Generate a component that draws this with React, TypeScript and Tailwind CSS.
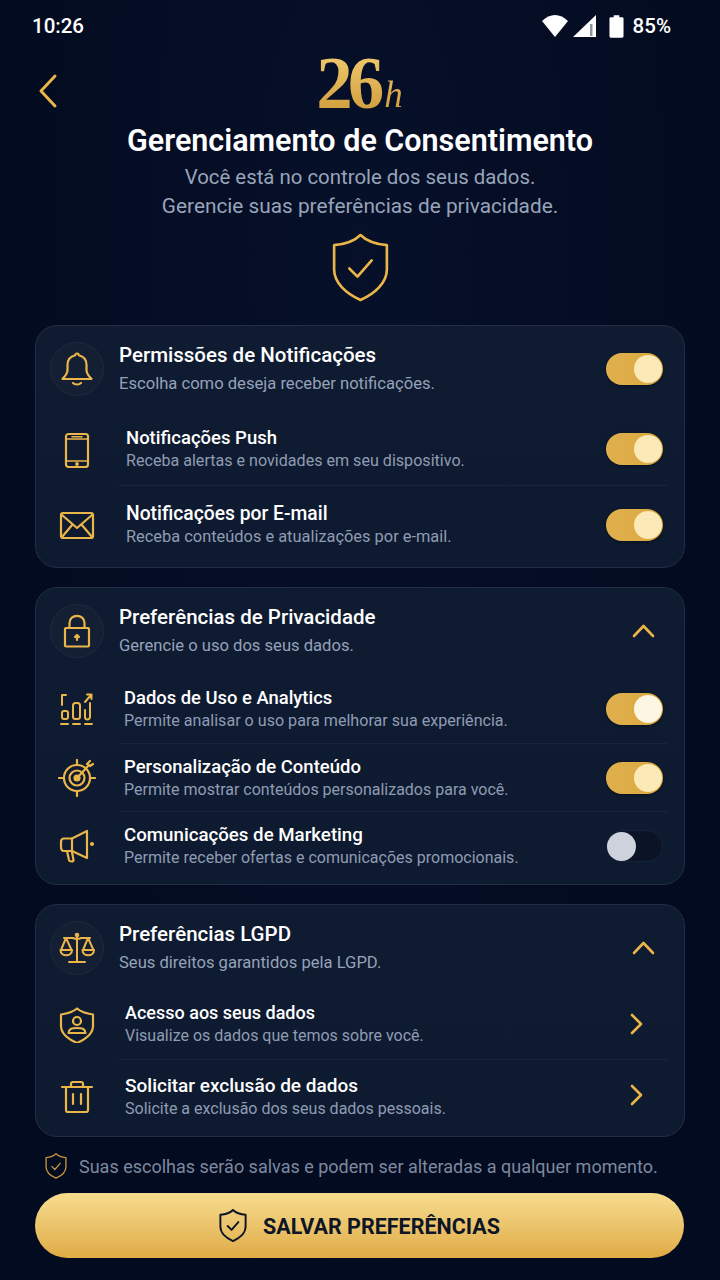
import * as React from 'react';

const GOLD = '#ebb649';

const Ico = ({ children, w = 36, h = 36, box = '0 0 36 36', sw = 2.2, color = GOLD }: { children: React.ReactNode; w?: number; h?: number; box?: string; sw?: number; color?: string }) => (
  <svg width={w} height={h} viewBox={box} fill="none" stroke={color} strokeWidth={sw} strokeLinecap="round" strokeLinejoin="round">
    {children}
  </svg>
);

const ShieldCheck = ({ w, h, color = GOLD, sw = 2 }: { w: number; h: number; color?: string; sw?: number }) => (
  <Ico w={w} h={h} box="0 0 56 68" color={color} sw={sw}>
    <path d="M28 2 C33 7 42 11 54 12 V36 C54 49 42 60 28 66 C14 60 2 49 2 36 V12 C14 11 23 7 28 2Z" />
    <path d="M17 35 L25 43 L39 27" />
  </Ico>
);

const BellIcon = () => (
  <Ico>
    <path d="M18 2.5 a1.8 1.8 0 0 1 1.8 1.8 C25 5.5 27.5 9 27.5 14 V19 C27.5 23 30 25 32.5 28 H3.5 C6 25 8.5 23 8.5 19 V14 C8.5 9 11 5.5 16.2 4.3 A1.8 1.8 0 0 1 18 2.5Z" />
    <path d="M14 32 C16 34 20 34 22 32" />
  </Ico>
);

const PhoneIcon = () => (
  <Ico>
    <rect x="7" y="2" width="22" height="33" rx="2.5" />
    <path d="M7 7 H29 M7 29 H29 M13 4.8 H23" strokeWidth={1.6} />
    <circle cx="18" cy="32" r="0.8" fill={GOLD} />
  </Ico>
);

const MailIcon = () => (
  <Ico>
    <rect x="2" y="6" width="32" height="25" rx="2" />
    <path d="M3 8 L18 21 L33 8 M3 30 L13.5 17.5 M33 30 L22.5 17.5" />
  </Ico>
);

const LockIcon = () => (
  <Ico>
    <rect x="6" y="15" width="24" height="18.5" rx="1" />
    <path d="M10.5 15 V10 C10.5 0.5 25.5 0.5 25.5 10 V15" />
    <path d="M18 27 V23 M16 24 L18 22 L20 24" />
  </Ico>
);

const ChartIcon = () => (
  <Ico sw={2}>
    <path d="M3 14 V4 H7" />
    <rect x="3" y="20" width="6" height="8" rx="2" />
    <rect x="14" y="12" width="7" height="16" rx="2.5" />
    <path d="M26 19 V26 a2.5 2.5 0 0 0 5 0 V12" />
    <path d="M26 11 L32 4 M28 3.5 H32.5 V8" />
    <path d="M2 33 H9 M14 33 H21 M26 33 H33" />
  </Ico>
);

const TargetIcon = () => (
  <Ico w={38} h={38} box="0 0 38 38">
    <circle cx="19" cy="19" r="13" />
    <circle cx="19" cy="19" r="7.5" />
    <circle cx="19" cy="19" r="2.5" fill={GOLD} />
    <path d="M19 1 V6 M19 32 V37 M1 19 H6 M32 19 H37 M19 19 L31 6 M29 5 L32 2 M32 7 L35 5" />
  </Ico>
);

const MegaphoneIcon = () => (
  <Ico w={36} h={36}>
    <path d="M28 3 V30 L13 23 H5 C2.5 23 2 21 2 19 V14 C2 12 2.5 10.5 5 10.5 H13Z" />
    <path d="M13 10.5 V23" />
    <path d="M8 23 L10 32 C10.5 34 14.5 34 14.5 32 L13 24" />
    <circle cx="33" cy="16" r="1" fill={GOLD} />
  </Ico>
);

const ScalesIcon = () => (
  <Ico w={36} h={36} sw={2}>
    <path d="M18 5 V31 M10 32 H26 M5 8 H14 C16 9 20 9 22 8 H31" />
    <circle cx="18" cy="5" r="1.3" />
    <path d="M7 8 L2 20 M7 8 L12.5 20 M29 8 L24 20 M29 8 L34.5 20" />
    <path d="M1.5 20 H13 C13 27 1.5 27 1.5 20Z M23.5 20 H35 C35 27 23.5 27 23.5 20Z" />
  </Ico>
);

const ShieldUserIcon = () => (
  <Ico>
    <path d="M18 1.5 C22 5 27 6.5 34 7.5 V19 C34 26 27 32 18 36 C9 32 2 26 2 19 V7.5 C9 6.5 14 5 18 1.5Z" />
    <circle cx="18" cy="14" r="4" />
    <path d="M9.5 26 C10 21.5 13 21 18 21 C23 21 26 21.5 26.5 26 H9.5Z" />
  </Ico>
);

const TrashIcon = () => (
  <Ico>
    <path d="M3 8 H33 M12 8 V5 a2 2 0 0 1 2 -2 H22 a2 2 0 0 1 2 2 V8" />
    <path d="M7 8 V31 a2 2 0 0 0 2 2 H27 a2 2 0 0 0 2 -2 V8" />
    <path d="M14 15 V25 M22 15 V25" />
  </Ico>
);

const ChevronUp = () => (
  <svg width="23" height="14" viewBox="0 0 23 14" fill="none" stroke={GOLD} strokeWidth="2.6" strokeLinecap="round" strokeLinejoin="round">
    <path d="M2 12 L11.5 2 L21 12" />
  </svg>
);

const ChevronRight = () => (
  <svg width="13" height="22" viewBox="0 0 13 22" fill="none" stroke={GOLD} strokeWidth="2.6" strokeLinecap="round" strokeLinejoin="round">
    <path d="M2 2 L11 11 L2 20" />
  </svg>
);

const Toggle = ({ on = true, white = false }: { on?: boolean; white?: boolean }) =>
  on ? (
    <div className="flex h-8 w-[57px] shrink-0 items-center justify-end rounded-full bg-gradient-to-r from-[#e0b04e] to-[#dba83f] pr-[1px] shadow-[0_1px_3px_rgba(0,0,0,0.4)]">
      <div className={`h-[28px] w-[28px] rounded-full ${white ? 'bg-[#fdf6e3]' : 'bg-[#fbeab8]'}`} />
    </div>
  ) : (
    <div className="flex h-8 w-[57px] shrink-0 items-center rounded-full border border-[#18233a] bg-[#0a1426]">
      <div className="h-[29px] w-[29px] rounded-full bg-[#cdd2dd]" />
    </div>
  );

const Header = ({ icon, title, sub, right, pr = 'pr-[21px]' }: { icon: React.ReactNode; title: string; sub: string; right: React.ReactNode; pr?: string }) => (
  <div className={`flex h-[70px] items-center pl-[14px] pt-4 ${pr}`}>
    <div className="flex h-[54px] w-[54px] shrink-0 items-center justify-center rounded-full border border-[#1f2a3f] bg-[#141f33]">{icon}</div>
    <div className="ml-[15px] flex-1">
      <div className="text-[20.5px] font-medium leading-[26px] text-white">{title}</div>
      <div className="mt-[4px] text-[16.6px] leading-[24px] text-[#95a2ba]">{sub}</div>
    </div>
    {right}
  </div>
);

const Row = ({ icon, title, sub, right, h, textPl, ts, ss = 'text-[16px]', line = true }: { icon: React.ReactNode; title: string; sub: string; right: React.ReactNode; h: string; textPl: string; ts: string; ss?: string; line?: boolean }) => (
  <div className={`flex items-stretch pl-[14px] pr-[17px] ${h}`}>
    <div className="flex w-[54px] shrink-0 items-center justify-center">{icon}</div>
    <div className={`ml-[15px] flex flex-1 items-center pr-1 ${textPl} ${line ? 'border-b border-[#1a2539]' : ''}`}>
      <div className="flex-1">
        <div className={`font-medium leading-[24px] text-white ${ts}`}>{title}</div>
        <div className={`leading-[22px] text-[#8f9cb4] ${ss}`}>{sub}</div>
      </div>
      {right}
    </div>
  </div>
);

const Card = ({ children, className }: { children: React.ReactNode; className: string }) => (
  <section className={`mx-[35px] rounded-[22px] border border-[#232e43] bg-gradient-to-b from-[#0f1b31] to-[#0e1a2f] ${className}`}>{children}</section>
);

export default function App() {
  return (
    <div
      className="relative h-[1280px] w-[720px] overflow-hidden bg-[radial-gradient(ellipse_at_50%_20%,#061029_0%,#030b20_70%)] text-white"
      style={{ fontFamily: 'Roboto, "Noto Sans", sans-serif' }}
    >
      {/* Status bar */}
      <div className="flex h-[52px] items-center justify-between pl-8 pr-[49px] text-[20.5px] font-medium">
        <span>10:26</span>
        <div className="flex items-center">
          <svg width="26" height="22" viewBox="0 0 26 22" fill="#fff">
            <path d="M0 6 C8 -2 18 -2 26 6 L13 22Z" />
          </svg>
          <svg className="ml-[5px]" width="23" height="22" viewBox="0 0 23 22" fill="#fff">
            <path d="M23 0 V22 H0Z" />
            <rect x="17" y="9" width="2.5" height="12" fill="#8d93a0" />
          </svg>
          <svg className="ml-[13px]" width="15" height="23" viewBox="0 0 16 24" fill="#fff">
            <path d="M5 0 H11 V2 H14 a1.5 1.5 0 0 1 1.5 1.5 V22.5 a1.5 1.5 0 0 1 -1.5 1.5 H2 a1.5 1.5 0 0 1 -1.5 -1.5 V3.5 A1.5 1.5 0 0 1 2 2 H5Z" />
          </svg>
          <span className="ml-[9px]">85%</span>
        </div>
      </div>

      {/* Header */}
      <div className="relative flex flex-col items-center">
        <button className="absolute left-[38px] top-[21px]">
          <svg width="20" height="36" viewBox="0 0 20 36" fill="none" stroke={GOLD} strokeWidth="3" strokeLinecap="round" strokeLinejoin="round">
            <path d="M17 3 L3 18 L17 33" />
          </svg>
        </button>
        <div
          className="flex h-[62px] items-end bg-gradient-to-b from-[#f0cb70] to-[#cf9c3a] bg-clip-text pr-[1px] text-transparent"
          style={{ fontFamily: '"Liberation Serif", serif' }}
        >
          <span className="text-[73px] font-bold leading-[60px] tracking-[-5px]">26</span>
          <span className="ml-[5px] text-[37px] italic leading-[38px]">h</span>
        </div>
        <h1 className="mt-[9px] text-[30.5px] font-semibold leading-[36px]">Gerenciamento de Consentimento</h1>
        <p className="mt-[4px] text-center text-[20.4px] leading-[29px] text-[#98a4ba]">
          Você está no controle dos seus dados.
          <br />
          <span className="text-[20.8px]">Gerencie suas preferências de privacidade.</span>
        </p>
        <div className="mt-[12px]">
          <ShieldCheck w={57} h={69} sw={2.6} />
        </div>
      </div>

      {/* Cards */}
      <div className="mt-[23px] flex flex-col gap-[19px]">
        <Card className="h-[243px]">
          <Header icon={<BellIcon />} title="Permissões de Notificações" sub="Escolha como deseja receber notificações." right={<Toggle />} />
          <div className="mt-[17px]" />
          <Row icon={<PhoneIcon />} title="Notificações Push" sub="Receba alertas e novidades em seu dispositivo." right={<Toggle />} h="h-[73px]" textPl="pl-[7px]" ts="text-[18.5px]" ss="text-[16.1px]" />
          <Row icon={<MailIcon />} title="Notificações por E-mail" sub="Receba conteúdos e atualizações por e-mail." right={<Toggle />} h="h-[77px]" textPl="pl-[7px]" ts="text-[19.3px]" ss="text-[16.4px]" line={false} />
        </Card>

        <Card className="h-[298px]">
          <Header icon={<LockIcon />} title="Preferências de Privacidade" sub="Gerencie o uso dos seus dados." right={<ChevronUp />} pr="pr-[29px]" />
          <div className="mt-[16px]" />
          <Row icon={<ChartIcon />} title="Dados de Uso e Analytics" sub="Permite analisar o uso para melhorar sua experiência." right={<Toggle white />} h="h-[70px]" textPl="pl-[5px]" ts="text-[18.4px]" ss="text-[16.1px]" />
          <Row icon={<TargetIcon />} title="Personalização de Conteúdo" sub="Permite mostrar conteúdos personalizados para você." right={<Toggle />} h="h-[68px]" textPl="pl-[5px]" ts="text-[18.5px]" />
          <Row icon={<MegaphoneIcon />} title="Comunicações de Marketing" sub="Permite receber ofertas e comunicações promocionais." right={<Toggle on={false} />} h="h-[68px]" textPl="pl-[5px]" ts="text-[18.7px]" line={false} />
        </Card>

        <Card className="h-[233px]">
          <Header icon={<ScalesIcon />} title="Preferências LGPD" sub="Seus direitos garantidos pela LGPD." right={<ChevronUp />} pr="pr-[29px]" />
          <div className="mt-[14px]" />
          <Row icon={<ShieldUserIcon />} title="Acesso aos seus dados" sub="Visualize os dados que temos sobre você." right={<div className="mr-[20px]"><ChevronRight /></div>} h="h-[71px]" textPl="pl-[6px]" ts="text-[18px]" />
          <Row icon={<TrashIcon />} title="Solicitar exclusão de dados" sub="Solicite a exclusão dos seus dados pessoais." right={<div className="mb-[4px] mr-[20px]"><ChevronRight /></div>} h="h-[73px]" textPl="pl-[6px]" ts="text-[19px]" line={false} />
        </Card>
      </div>

      {/* Footer */}
      <div className="mt-[16px] flex h-[26px] items-center pl-[45px]">
        <ShieldCheck w={22} h={26} sw={3.5} color="#c4943c" />
        <span className="ml-[12px] text-[18px] text-[#7d899f]">Suas escolhas serão salvas e podem ser alteradas a qualquer momento.</span>
      </div>
      <button className="mx-[35px] mt-[14px] flex h-[65px] w-[649px] items-center justify-center rounded-full bg-gradient-to-b from-[#f7dd8f] to-[#dfab44] text-[21.5px] font-bold text-[#0d1526]">
        <ShieldCheck w={28} h={33} color="#0d1526" sw={4} />
        <span className="ml-[16px] mt-[3px]">SALVAR PREFERÊNCIAS</span>
      </button>
    </div>
  );
}
